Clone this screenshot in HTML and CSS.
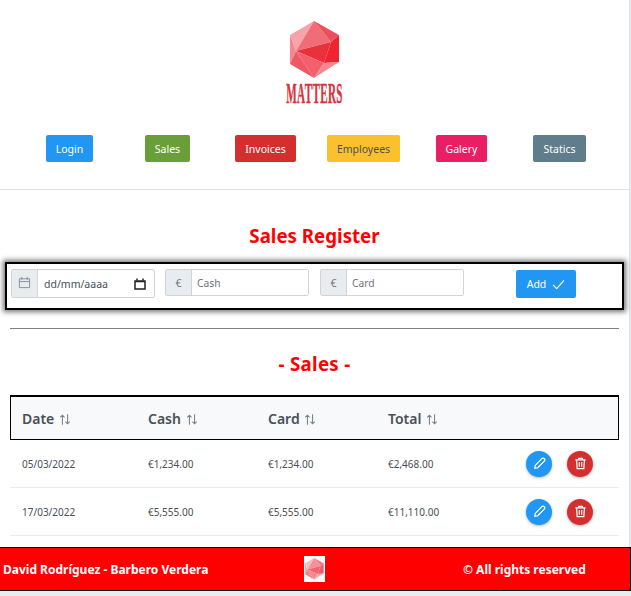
FILE: index.html
```html
<!DOCTYPE html>
<html lang="en">

<head>
    <meta charset="UTF-8">
    <meta name="viewport" content="width=device-width, initial-scale=1.0">
    <title>Matters - Sales</title>
    <link rel="stylesheet" href="styles.css">
</head>

<body>
    <svg class="defs" width="0" height="0">
        <symbol id="gem" viewBox="0 0 50 58">
            <polygon points="0,14 24,0 6,30" fill="#f7a3ab" />
            <polygon points="24,0 41,21 6,30" fill="#f06d78" />
            <polygon points="24,0 49,14 41,21" fill="#ea505c" />
            <polygon points="49,14 49,41 34,42 41,21" fill="#ee2430" />
            <polygon points="6,30 41,21 34,42" fill="#ea303b" />
            <polygon points="0,14 6,30 0,43" fill="#f58690" />
            <polygon points="0,43 6,30 24,57" fill="#ee5864" />
            <polygon points="6,30 34,42 24,57" fill="#f2606b" />
            <polygon points="34,42 49,41 24,57" fill="#f58790" />
        </symbol>
        <symbol id="sort" viewBox="0 0 14 14">
            <path d="M4 13V2M1.500 4.500 4 2l2.500 2.500M10 1v11M7.500 9.500 10 12l2.500-2.500" fill="none" stroke="currentColor" stroke-width="1.200" />
        </symbol>
        <symbol id="pencil" viewBox="0 0 14 14">
            <path d="M9.500 1.800a1.500 1.500 0 0 1 2.700 2.600L5 11.600l-3.200.7.700-3.200z" fill="none" stroke="currentColor" stroke-width="1.300" stroke-linejoin="round" />
        </symbol>
        <symbol id="trash" viewBox="0 0 14 14">
            <path d="M1.500 3.200h11M5 3V1.500h4V3M2.800 3.500l.6 9h7.200l.6-9M5.700 5.500v5M8.300 5.500v5" fill="none" stroke="currentColor" stroke-width="1.300" />
        </symbol>
    </svg>

    <div class="page">
        <header class="top">
            <div class="logo">
                <svg class="logo-gem"><use href="#gem" /></svg>
                <div class="logo-name">MATTERS</div>
            </div>
            <nav class="menu">
                <a class="btn blue">Login</a>
                <a class="btn green">Sales</a>
                <a class="btn red">Invoices</a>
                <a class="btn yellow">Employees</a>
                <a class="btn pink">Galery</a>
                <a class="btn slate">Statics</a>
            </nav>
        </header>

        <main>
            <h2 class="title register-title">Sales Register</h2>

            <form class="register">
                <div class="group date-group">
                    <span class="addon">
                        <svg class="cal" viewBox="0 0 14 14">
                            <path d="M1.500 3h11v9.500h-11zM1.500 6h11M4 1v3M10 1v3" fill="none" stroke="currentColor" stroke-width="1" />
                        </svg>
                    </span>
                    <div class="date-field">
                        <span>dd/mm/aaaa</span>
                        <svg class="cal-pick" viewBox="0 0 12 12">
                            <path d="M1 3h10v8H1zM1 3.500h10" fill="none" stroke="#222" stroke-width="1.500" />
                            <path d="M3 .5v2M9 .5v2" stroke="#222" stroke-width="1.500" />
                        </svg>
                    </div>
                </div>
                <div class="group money-group">
                    <span class="addon">€</span>
                    <input type="text" placeholder="Cash">
                </div>
                <div class="group money-group card-group">
                    <span class="addon">€</span>
                    <input type="text" placeholder="Card">
                </div>
                <button type="button" class="btn blue add">Add
                    <svg class="check" viewBox="0 0 14 12">
                        <path d="M1 6.500 5 10.500 13 1.500" fill="none" stroke="currentColor" stroke-width="1.200" />
                    </svg>
                </button>
            </form>

            <hr class="rule">

            <h2 class="title sales-title">- Sales -</h2>

            <table class="sales">
                <thead>
                    <tr>
                        <th class="col-date">Date <svg class="sort"><use href="#sort" /></svg></th>
                        <th class="col-num">Cash <svg class="sort"><use href="#sort" /></svg></th>
                        <th class="col-num">Card <svg class="sort"><use href="#sort" /></svg></th>
                        <th class="col-num">Total <svg class="sort"><use href="#sort" /></svg></th>
                        <th></th>
                    </tr>
                </thead>
                <tbody>
                    <tr>
                        <td>05/03/2022</td>
                        <td>€1,234.00</td>
                        <td>€1,234.00</td>
                        <td>€2,468.00</td>
                        <td>
                            <div class="actions">
                                <button class="round blue"><svg><use href="#pencil" /></svg></button>
                                <button class="round red"><svg><use href="#trash" /></svg></button>
                            </div>
                        </td>
                    </tr>
                    <tr>
                        <td>17/03/2022</td>
                        <td>€5,555.00</td>
                        <td>€5,555.00</td>
                        <td>€11,110.00</td>
                        <td>
                            <div class="actions">
                                <button class="round blue"><svg><use href="#pencil" /></svg></button>
                                <button class="round red"><svg><use href="#trash" /></svg></button>
                            </div>
                        </td>
                    </tr>
                </tbody>
            </table>
        </main>

        <footer class="foot">
            <span class="foot-name">David Rodríguez - Barbero Verdera</span>
            <span class="foot-logo"><svg><use href="#gem" /></svg></span>
            <span class="foot-rights">© All rights reserved</span>
        </footer>
    </div>
</body>

</html>
```

FILE: styles.css
```css
* {
    box-sizing: border-box;
}

html,
body {
    margin: 0;
    height: 596px;
    overflow: hidden;
}

body {
    font-family: "Noto Sans", "Open Sans", sans-serif;
    background-color: #e9ecef;
    color: #495057;
}

.defs {
    display: block;
    height: 0;
}

.page {
    width: 630px;
    background: #fff;
    border-right: 1px solid #dee2e6;
    height: 591px;
}

/* header */
.top {
    height: 190px;
    padding-top: 21px;
    border-bottom: 1px solid #dee2e6;
}

.logo {
    display: flex;
    flex-direction: column;
    align-items: center;
    height: 114px;
}

.logo-gem {
    width: 50px;
    height: 58px;
}

.logo-name {
    margin-top: 2px;
    font-family: "Liberation Serif", serif;
    font-weight: bold;
    font-size: 30px;
    line-height: 24px;
    color: #dc2f3a;
    -webkit-text-stroke: .4px #dc2f3a;
    transform: scaleX(.37);
    letter-spacing: 1px;
}

.menu {
    display: grid;
    grid-template-columns: repeat(6, 98px);
    justify-content: center;
    justify-items: center;
}

.btn {
    display: block;
    height: 27px;
    padding: 0 10px;
    border: none;
    border-radius: 2px;
    font-family: inherit;
    font-size: 10.500px;
    line-height: 29px;
    color: #fff;
    cursor: pointer;
}

.blue {
    background-color: #2196f3;
}

.green {
    background-color: #689f38;
}

.red {
    background-color: #d32f2f;
}

.yellow {
    background-color: #fbc02d;
    color: #495057;
}

.pink {
    background-color: #e91e63;
}

.slate {
    background-color: #607d8b;
}

/* titles */
.title {
    margin: 0;
    text-align: center;
    color: #f00;
    font-size: 18.700px;
    line-height: 28px;
    font-weight: bold;
}

.register-title {
    margin-top: 32px;
}

.sales-title {
    margin-top: 21px;
    letter-spacing: .3px;
}

/* register form */
.register {
    display: flex;
    align-items: flex-start;
    width: 619px;
    height: 48px;
    margin: 12px 0 0 5px;
    padding: 5px 4px;
    border: 2px solid #000;
    box-shadow: 0 0 5px 2px #777;
}

.group {
    display: flex;
    width: 144px;
    height: 27px;
    border: 1px solid #ced4da;
    border-radius: 2px;
    font-size: 10.500px;
}

.date-group {
    height: 29px;
}

.money-group {
    margin-left: 10px;
}

.card-group {
    margin-left: 11px;
}

.addon {
    display: flex;
    align-items: center;
    justify-content: center;
    width: 26px;
    flex: none;
    background-color: #e9ecef;
    border-right: 1px solid #ced4da;
    color: #6c757d;
}

.cal {
    width: 13px;
    height: 13px;
    margin-top: -3px;
    color: #7f8c9a;
}

.date-field {
    display: flex;
    flex: 1;
    align-items: center;
    justify-content: space-between;
    padding: 1px 8px 0 6px;
    color: #495057;
}

.cal-pick {
    width: 12px;
    height: 12px;
    margin-top: -1px;
}

.group input {
    flex: 1;
    min-width: 0;
    border: none;
    padding: 0 5px;
    font-family: inherit;
    font-size: 10.300px;
    color: #495057;
    background: #fff;
}

.group input::placeholder {
    color: #6c757d;
}

.add {
    display: flex;
    align-items: center;
    justify-content: center;
    gap: 6px;
    width: 60px;
    height: 28px;
    margin: 1px 0 0 52px;
    padding: 0;
}

.check {
    width: 13px;
    height: 11px;
}

.rule {
    width: 609px;
    height: 1px;
    margin: 18px 0 0 10px;
    border: none;
    background-color: #808080;
}

/* table */
.sales {
    width: 609px;
    margin: 17px 0 0 10px;
    border-collapse: separate;
    border-spacing: 0;
    table-layout: fixed;
}

.sales th {
    height: 45px;
    padding: 0 0 0 12px;
    text-align: left;
    font-size: 14px;
    font-weight: 600;
    background-color: #f8f9fa;
    border-top: 2px solid #000;
    border-bottom: 1px solid #000;
}

.sales th:first-child {
    border-left: 1px solid #000;
    padding-left: 11px;
    width: 127px;
}

.sales th:nth-child(2),
.sales th:nth-child(3),
.sales th:nth-child(4) {
    width: 120px;
}

.sales th.col-num {
    padding-left: 11px;
}

.sales th:last-child {
    border-right: 1px solid #000;
}

.sort {
    width: 12px;
    height: 13px;
    margin-left: 1px;
    vertical-align: -2px;
    color: #7a7f86;
}

.sales td {
    height: 48px;
    padding: 0 0 0 11px;
    font-size: 10px;
    border-bottom: 1px solid #e9ecef;
}

.sales td:first-child {
    padding-left: 12px;
}

.actions {
    display: flex;
    gap: 15px;
    padding-left: 18px;
}

.round {
    display: flex;
    align-items: center;
    justify-content: center;
    width: 26px;
    height: 26px;
    padding: 0;
    border: none;
    border-radius: 50%;
    color: #fff;
    box-shadow: 0 1px 3px rgba(0, 0, 0, .3);
}

.round svg {
    width: 13px;
    height: 13px;
}

/* footer */
.foot {
    display: flex;
    align-items: center;
    width: 631px;
    height: 44px;
    margin-top: 11px;
    padding-left: 3px;
    background-color: #f00;
    border: 1px solid #000;
    border-left: none;
    color: #fff;
    font-size: 12px;
    font-weight: bold;
}

.foot-name {
    width: 301px;
    white-space: nowrap;
}

.foot-logo {
    display: flex;
    align-items: center;
    justify-content: center;
    width: 21px;
    height: 26px;
    background: #fff;
}

.foot-logo svg {
    width: 19px;
    height: 22px;
    opacity: .75;
}

.foot-rights {
    margin-left: 138px;
}
```
